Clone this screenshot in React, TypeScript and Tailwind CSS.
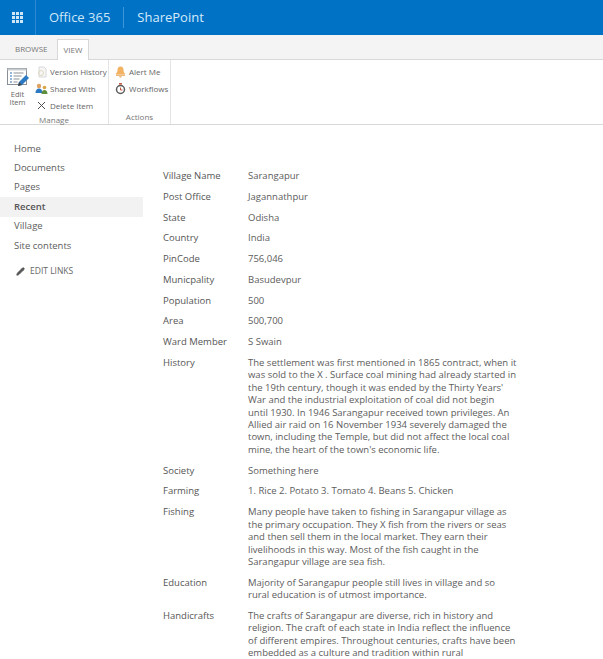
import { Pencil, X } from "lucide-react"

const navItems = ["Home", "Documents", "Pages", "Recent", "Village", "Site contents"]

const rows = [
  { label: "Village Name", lines: ["Sarangapur"] },
  { label: "Post Office", lines: ["Jagannathpur"] },
  { label: "State", lines: ["Odisha"] },
  { label: "Country", lines: ["India"] },
  { label: "PinCode", lines: ["756,046"] },
  { label: "Municpality", lines: ["Basudevpur"] },
  { label: "Population", lines: ["500"] },
  { label: "Area", lines: ["500,700"] },
  { label: "Ward Member", lines: ["S Swain"] },
  {
    label: "History",
    lines: [
      "The settlement was first mentioned in 1865 contract, when it",
      "was sold to the X . Surface coal mining had already started in",
      "the 19th century, though it was ended by the Thirty Years'",
      "War and the industrial exploitation of coal did not begin",
      "until 1930. In 1946 Sarangapur received town privileges. An",
      "Allied air raid on 16 November 1934 severely damaged the",
      "town, including the Temple, but did not affect the local coal",
      "mine, the heart of the town's economic life.",
    ],
  },
  { label: "Society", lines: ["Something here"] },
  { label: "Farming", lines: ["1. Rice 2. Potato 3. Tomato 4. Beans 5. Chicken"] },
  {
    label: "Fishing",
    lines: [
      "Many people have taken to fishing in Sarangapur village as",
      "the primary occupation. They X fish from the rivers or seas",
      "and then sell them in the local market. They earn their",
      "livelihoods in this way. Most of the fish caught in the",
      "Sarangapur village are sea fish.",
    ],
  },
  {
    label: "Education",
    lines: [
      "Majority of Sarangapur people still lives in village and so",
      "rural education is of utmost importance.",
    ],
  },
  {
    label: "Handicrafts",
    lines: [
      "The crafts of Sarangapur are diverse, rich in history and",
      "religion. The craft of each state in India reflect the influence",
      "of different empires. Throughout centuries, crafts have been",
      "embedded as a culture and tradition within rural",
    ],
  },
]

function EditItemIcon() {
  return (
    <svg width="22" height="22" viewBox="0 0 22 22" fill="none">
      <rect x="0.5" y="1.5" width="19" height="16" fill="#fff" stroke="#8a8f96" />
      <path d="M0.5 1.5h19v2h-19z" fill="#c9ccd1" />
      <path d="M3 6h2M3 9h2M3 12h2M3 15h2" stroke="#2f6fb3" />
      <path d="M6.5 6h10M6.5 9h8M6.5 12h6M6.5 15h4" stroke="#8a8f96" />
      <path d="M11 19l1-4 7-7 3 3-7 7z" fill="#2b79c2" />
      <path d="M11 19l1-4 3 3z" fill="#444" />
    </svg>
  )
}

function VersionIcon() {
  return (
    <svg width="12" height="12" viewBox="0 0 12 12" fill="none">
      <path d="M3 1h5l2 2v8H3z" fill="#f7f7f7" stroke="#d8d8d8" />
      <circle cx="5" cy="7" r="2.5" stroke="#e0d8c0" />
    </svg>
  )
}

function SharedIcon() {
  return (
    <svg width="13" height="12" viewBox="0 0 13 12">
      <circle cx="4" cy="3" r="2.2" fill="#e0a060" />
      <path d="M0.5 10c0-3 1.5-4.5 3.5-4.5S7.5 7 7.5 10z" fill="#2b79c2" />
      <circle cx="9.5" cy="4.5" r="1.8" fill="#d9a441" />
      <path d="M6.5 11c0-2.500 1.300-4 3-4s3 1.500 3 4z" fill="#5f8f3e" />
    </svg>
  )
}

function BellIcon() {
  return (
    <svg width="11" height="12" viewBox="0 0 11 12">
      <path d="M5.500 0.500c2 0 3 1.500 3 3.500 0 2 .8 3 2 4H.5c1.200-1 2-2 2-4 0-2 1-3.500 3-3.500z" fill="#f2b262" />
      <rect x="1" y="8.500" width="9" height="1.200" fill="#e59a3c" />
      <circle cx="5.500" cy="10.500" r="1.200" fill="#eebf86" />
    </svg>
  )
}

function WorkflowIcon() {
  return (
    <svg width="11" height="12" viewBox="0 0 11 12" fill="none">
      <circle cx="5.500" cy="6.500" r="4" stroke="#5a5a5a" strokeWidth="1.500" />
      <path d="M5.500 4.500v2.500h2" stroke="#c2553a" />
      <path d="M4 .8h3" stroke="#c2553a" strokeWidth="1.500" />
    </svg>
  )
}

function RibbonItem({ icon, label }: { icon: React.ReactNode; label: string }) {
  return (
    <div className="flex h-[17px] items-center gap-[2px]">
      <span className="flex w-[13px] justify-center">{icon}</span>
      <span>{label}</span>
    </div>
  )
}

export default function App() {
  return (
    <div className="h-[659px] w-[603px] overflow-hidden bg-white text-[9.5px] text-[#5c5c5c] [font-family:'Open_Sans','Noto_Sans',sans-serif]">
      {/* Suite bar */}
      <div className="flex h-[35px] items-stretch bg-[#0072c6] text-white">
        <div className="flex w-[36px] items-center justify-center border-r border-[#2a8ad2]">
          <div className="grid grid-cols-3 gap-[1.500px]">
            {Array.from({ length: 9 }).map((_, i) => (
              <span key={i} className="h-[2.500px] w-[2.500px] bg-[#cfe6f7]" />
            ))}
          </div>
        </div>
        <div className="flex items-center pl-[13px] text-[13px] text-[#cfe6f7]">Office 365</div>
        <div className="my-[7px] ml-[13px] w-px bg-[#3d97d9]" />
        <div className="flex items-center pl-[13px] text-[13px] text-[#d6eafa]">SharePoint</div>
      </div>

      {/* Tabs */}
      <div className="flex h-[25px] items-end border-b border-[#d8d8d8] bg-[#f4f4f4] pl-[6px] text-[8px]">
        <div className="flex h-[20px] items-center px-[9px] text-[#777]">BROWSE</div>
        <div className="-mb-px flex h-[21px] items-center border-x border-t border-[#d8d8d8] bg-white px-[6px] text-[#777]">VIEW</div>
      </div>

      {/* Ribbon */}
      <div className="flex h-[65px] border-b border-[#d8d8d8] text-[8px] text-[#666]">
        <div className="flex w-[109px] flex-col border-r border-[#e4e4e4]">
          <div className="flex flex-1 pt-[3px]">
            <div className="flex w-[35px] flex-col items-center pt-[4px] leading-[8px]">
              <EditItemIcon />
              <span className="mt-[1px] text-center text-[7.500px]">Edit<br />Item</span>
            </div>
            <div className="flex flex-col">
              <RibbonItem icon={<VersionIcon />} label="Version History" />
              <RibbonItem icon={<SharedIcon />} label="Shared With" />
              <RibbonItem icon={<X size={13} strokeWidth={1.75} className="text-[#444]" />} label="Delete Item" />
            </div>
          </div>
          <div className="pb-[1px] text-center text-[#777]">Manage</div>
        </div>
        <div className="flex w-[62px] flex-col border-r border-[#e4e4e4]">
          <div className="flex flex-1 flex-col pl-[5px] pt-[3px]">
            <RibbonItem icon={<BellIcon />} label="Alert Me" />
            <RibbonItem icon={<WorkflowIcon />} label="Workflows" />
          </div>
          <div className="pb-[1px] text-center text-[#777]">Actions</div>
        </div>
      </div>

      <div className="flex">
        {/* Quick launch */}
        <div className="w-[143px] pt-[14px] shrink-0">
          {navItems.map((item) => (
            <div
              key={item}
              className={`flex h-[19.400px] items-center pl-[14px] ${item === "Recent" ? "bg-[#f2f2f2] font-semibold text-[#555]" : ""}`}
            >
              {item}
            </div>
          ))}
          <div className="mt-[10px] flex h-[12px] items-center pl-[16px] text-[8.500px] text-[#666]">
            <Pencil size={9} fill="#555" className="mr-[5px] text-[#555]" />
            EDIT LINKS
          </div>
        </div>

        {/* Item fields */}
        <div className="pl-[20px] pt-[45px]">
          {rows.map((row) => (
            <div key={row.label} className="flex pb-[8.300px] leading-[12.450px]">
              <div className="w-[85px] shrink-0 text-[#555]">{row.label}</div>
              <div className="whitespace-nowrap">
                {row.lines.map((line) => (
                  <div key={line}>{line}</div>
                ))}
              </div>
            </div>
          ))}
        </div>
      </div>
    </div>
  )
}
